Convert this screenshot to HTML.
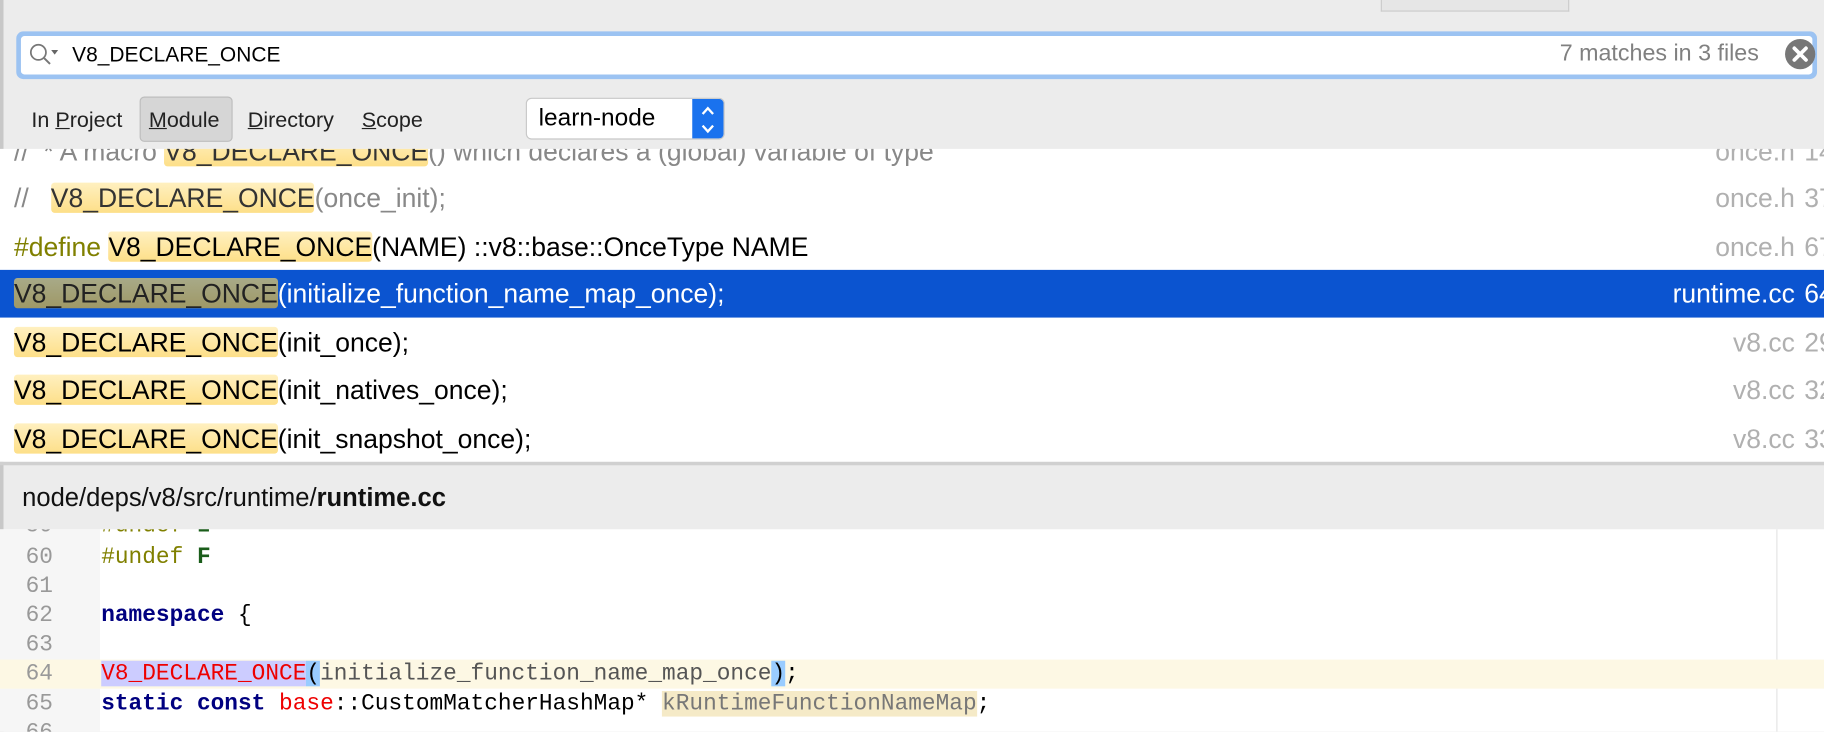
<!DOCTYPE html>
<html><head><meta charset="utf-8"><style>
html,body{margin:0;padding:0;width:1824px;height:732px;overflow:hidden;background:#ececec}
#w{position:absolute;left:0;top:0;width:1568px;height:629px;transform:scale(1.16327);transform-origin:0 0;font-family:"Liberation Sans",sans-serif}
.a{position:absolute}
.row{position:absolute;left:0;width:1568px;height:41px;font-size:22.8px;line-height:41px;white-space:nowrap;color:#000}
.row .f{position:absolute;right:25px;top:0;color:#b0b0b0}
.row .f b{font-weight:normal;position:absolute;left:100%;margin-left:8px}
.h{background:linear-gradient(#fff0c0,#fddf88);border-radius:3px}
.g{color:#888}
.code{position:absolute;left:0;top:455px;width:1568px;height:174px;background:#fff;overflow:hidden;font-family:"Liberation Mono",monospace;font-size:19.6px}
.ln{position:absolute;left:0;width:1568px;height:25px;line-height:25px}
.ln .n{position:absolute;left:22px;color:#999}
.ln .c{position:absolute;left:87px;white-space:pre}
</style></head><body><div id="w">
<div class="a" style="left:0;top:0;width:3px;height:629px;background:#c8c8c8"></div>
<div class="a" style="left:1187px;top:0;width:160px;height:9px;border:1px solid #ccc;border-top:0;background:#e6e6e6"></div>
<div class="a" style="left:14px;top:27px;width:1548px;height:41px;background:#9cc3f2;border-radius:6px"></div>
<div class="a" style="left:18px;top:31px;width:1540px;height:33px;background:#fff;border-radius:3px"></div>
<svg class="a" style="left:24px;top:36px" width="30" height="22"><circle cx="9" cy="9" r="6.5" fill="none" stroke="#777" stroke-width="1.5"/><line x1="14" y1="14" x2="19" y2="19" stroke="#777" stroke-width="1.7"/><path d="M20 7h6l-3 4z" fill="#666"/></svg>
<div class="a" style="left:62px;top:35px;font-size:18px;line-height:24px">V8_DECLARE_ONCE</div>
<div class="a" style="right:56px;top:34px;font-size:20px;line-height:24px;color:#808080">7 matches in 3 files</div>
<svg class="a" style="left:1534px;top:33px" width="27" height="27"><circle cx="13.5" cy="13.5" r="13" fill="#777"/><path d="M8.5 8.5l10 10M18.5 8.5l-10 10" stroke="#fff" stroke-width="3.2" stroke-linecap="round"/></svg>
<div class="a" style="left:120px;top:83px;width:80px;height:39px;background:#d6d6d6;border:1px solid #bdbdbd;border-radius:4px;box-sizing:border-box"></div>
<div class="a" style="left:27px;top:91px;font-size:18.5px;line-height:24px;color:#222">In <u>P</u>roject</div>
<div class="a" style="left:128px;top:91px;font-size:18.5px;line-height:24px;color:#222"><u>M</u>odule</div>
<div class="a" style="left:213px;top:91px;font-size:18.5px;line-height:24px;color:#222"><u>D</u>irectory</div>
<div class="a" style="left:311px;top:91px;font-size:18.5px;line-height:24px;color:#222"><u>S</u>cope</div>
<div class="a" style="left:452px;top:84px;width:171px;height:36px;background:#fff;border:1px solid #c8c8c8;border-radius:5px;box-sizing:border-box;overflow:hidden">
<div class="a" style="left:10px;top:4px;font-size:21px;line-height:26px">learn-node</div>
<svg class="a" style="right:0;top:0" width="27" height="36"><rect width="27" height="36" fill="#1a72ee"/><path d="M9 13l4.5-5 4.5 5M9 23l4.5 5 4.5-5" fill="none" stroke="#fff" stroke-width="2"/></svg></div>
<div class="a" style="left:0;top:128px;width:1568px;height:269px;background:#fff"></div>
<div class="row" style="top:128px;height:22px;overflow:hidden"><div class="a" style="left:12px;top:-18px;color:#888">// &nbsp;* A macro <span class="h" style="color:#333">V8_DECLARE_ONCE</span>() which declares a (global) variable of type</div><span class="f" style="top:-18px">once.h<b>14</b></span></div>
<div class="row" style="top:150px"><span class="a g" style="left:12px">//&nbsp;&nbsp;&nbsp;<span class="h" style="color:#333">V8_DECLARE_ONCE</span>(once_init);</span><span class="f">once.h<b>37</b></span></div>
<div class="row" style="top:192px"><span class="a" style="left:12px"><span style="color:#808000">#define</span> <span class="h">V8_DECLARE_ONCE</span>(NAME) ::v8::base::OnceType NAME</span><span class="f">once.h<b>67</b></span></div>
<div class="row" style="top:232px;background:#0b54d0;color:#fff"><span class="a" style="left:12px"><span style="background:linear-gradient(#a8aa88,#9f9866);color:#222;border-radius:3px">V8_DECLARE_ONCE</span>(initialize_function_name_map_once);</span><span class="f" style="color:#fff">runtime.cc<b>64</b></span></div>
<div class="row" style="top:274px"><span class="a" style="left:12px"><span class="h">V8_DECLARE_ONCE</span>(init_once);</span><span class="f">v8.cc<b>29</b></span></div>
<div class="row" style="top:315px"><span class="a" style="left:12px"><span class="h">V8_DECLARE_ONCE</span>(init_natives_once);</span><span class="f">v8.cc<b>32</b></span></div>
<div class="row" style="top:357px"><span class="a" style="left:12px"><span class="h">V8_DECLARE_ONCE</span>(init_snapshot_once);</span><span class="f">v8.cc<b>33</b></span></div>
<div class="a" style="left:0;top:397px;width:1568px;height:3px;background:#d0d0d0"></div>
<div class="a" style="left:19px;top:415px;font-size:22px;line-height:26px;color:#111">node/deps/v8/src/runtime/<b>runtime.cc</b></div>
<div class="code">
<div class="a" style="left:0;top:0;width:86px;height:174px;background:#f6f6f6"></div>
<div class="a" style="left:1527px;top:0;width:1px;height:174px;background:#e4e4e4"></div>
<div class="ln" style="top:-15px"><span class="n">59</span><span class="c" style="color:#808000">#undef <b style="color:#1a5d1a">I</b></span></div>
<div class="ln" style="top:12px"><span class="n">60</span><span class="c" style="color:#808000">#undef <b style="color:#1a5d1a">F</b></span></div>
<div class="ln" style="top:37px"><span class="n">61</span></div>
<div class="ln" style="top:62px"><span class="n">62</span><span class="c"><b style="color:#000080">namespace</b> {</span></div>
<div class="ln" style="top:87px"><span class="n">63</span></div>
<div class="ln" style="top:112px;background:#fdf8e4"><span class="n">64</span><span class="c"><span style="background:#ccccff;color:#e00">V8_DECLARE_ONCE</span><span style="background:#99ccff">(</span><span style="color:#555">initialize_function_name_map_once</span><span style="background:#99ccff">)</span>;</span></div>
<div class="ln" style="top:138px"><span class="n">65</span><span class="c"><b style="color:#000080">static const</b> <span style="color:#e00">base</span>::CustomMatcherHashMap* <span style="background:#f5eac7;color:#777">kRuntimeFunctionNameMap</span>;</span></div>
<div class="ln" style="top:163px"><span class="n">66</span></div>
</div>
</div></body></html>
